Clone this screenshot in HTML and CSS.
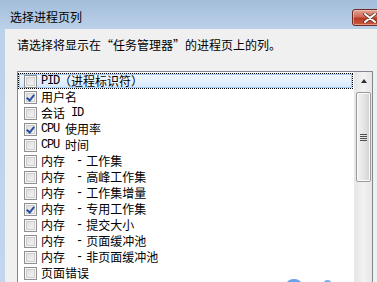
FILE: index.html
```html
<!DOCTYPE html>
<html lang="zh-CN">

<head>
    <meta charset="UTF-8">
    <title>选择进程页列</title>
    <link rel="stylesheet" href="styles.css">
</head>

<body>
    <div class="window">
        <!-- title bar -->
        <div class="titlebar">
            <span class="title">选择进程页列</span>
            <button class="close" aria-label="关闭">
                <svg width="14" height="10" viewBox="0 0 14 10">
                    <path d="M2 1 L12 9 M12 1 L2 9" stroke="#5a2a22" stroke-width="3.4" stroke-linecap="round" />
                    <path d="M2 1 L12 9 M12 1 L2 9" stroke="#ffffff" stroke-width="2" stroke-linecap="round" />
                </svg>
            </button>
        </div>

        <div class="frame">
            <div class="content">
                <p class="hint">请选择将显示在“任务管理器”的进程页上的列。</p>

                <div class="listbox">
                    <ul class="rows">
                        <li class="row selected"><span class="box"></span><span class="lat">PID</span>（进程标识符）</li>
                        <li class="row"><span class="box on"></span>用户名</li>
                        <li class="row"><span class="box"></span>会话<span class="lat"> ID</span></li>
                        <li class="row"><span class="box on"></span><span class="lat">CPU </span>使用率</li>
                        <li class="row"><span class="box"></span><span class="lat">CPU </span>时间</li>
                        <li class="row"><span class="box"></span>内存<span class="dash">-</span>工作集</li>
                        <li class="row"><span class="box"></span>内存<span class="dash">-</span>高峰工作集</li>
                        <li class="row"><span class="box"></span>内存<span class="dash">-</span>工作集增量</li>
                        <li class="row"><span class="box on"></span>内存<span class="dash">-</span>专用工作集</li>
                        <li class="row"><span class="box"></span>内存<span class="dash">-</span>提交大小</li>
                        <li class="row"><span class="box"></span>内存<span class="dash">-</span>页面缓冲池</li>
                        <li class="row"><span class="box"></span>内存<span class="dash">-</span>非页面缓冲池</li>
                        <li class="row"><span class="box"></span>页面错误</li>
                    </ul>

                    <!-- vertical scrollbar -->
                    <div class="scrollbar">
                        <div class="arrow"><span class="tri"></span></div>
                        <div class="thumb"><span class="grip"></span></div>
                    </div>
                </div>
            </div>
        </div>

        <div class="mark"><span class="m1"></span><span class="m2"></span></div>
    </div>
</body>

</html>
```

FILE: styles.css
```css
html,
body {
    margin: 0;
    padding: 0;
}

body {
    width: 377px;
    height: 282px;
    overflow: hidden;
    font-family: "Noto Sans CJK SC", "Liberation Sans", sans-serif;
    font-size: 12px;
    color: #000;
}

.window {
    position: relative;
    height: 282px;
    display: flex;
    flex-direction: column;
    background: linear-gradient(#a2bcd9, #bcd2ea 30px, #c2d7ee);
    overflow: hidden;
}

.titlebar {
    height: 29px;
    flex: none;
    display: flex;
    justify-content: space-between;
    align-items: flex-start;
}

.title {
    margin: 8px 0 0 10px;
    line-height: 18px;
}

.close {
    margin: 9px -12px 0 0;
    width: 37px;
    height: 17px;
    padding: 0 0 0 10px;
    border: 1px solid #6e2a23;
    border-radius: 3px;
    background: linear-gradient(#e3a596, #cf6a55 45%, #b83a24 55%, #c9583f);
    box-shadow: inset 0 0 0 1px rgba(255, 220, 210, 0.5);
    display: flex;
    align-items: center;
}

.frame {
    flex: 1;
    padding-left: 5px;
    display: flex;
}

.content {
    flex: 1;
    background: #f0f0f0;
    padding: 8px 0 0 12px;
}

.hint {
    margin: 0;
    line-height: 16px;
    height: 16px;
}

.listbox {
    margin-top: 18px;
    width: 354px;
    height: 240px;
    border: 1px solid #828790;
    background: #fff;
    display: flex;
}

.rows {
    flex: 1;
    list-style: none;
    margin: 0;
    padding: 1px 1px 0 0;
}

.row {
    box-sizing: border-box;
    height: 16px;
    line-height: 14px;
    display: flex;
    align-items: center;
    padding-left: 5px;
    white-space: pre;
    border: 1px solid transparent;
}

.selected {
    border: 1px dotted #000;
    background: linear-gradient(#f2f8fe, #d6e8fc);
    box-shadow: inset 0 0 0 1px #a8cbf2;
}

.lat {
    font-family: "Liberation Mono", monospace;
    font-size: 12px;
    letter-spacing: -1.2px;
}

.dash {
    font-family: "Liberation Mono", monospace;
    font-size: 12px;
    margin: 0 3px 0 11px;
}

.box {
    flex: none;
    width: 11px;
    height: 11px;
    margin-right: 4px;
    border: 1px solid #8e8f8f;
    background: linear-gradient(135deg, #dcdcdc, #f4f4f4);
    box-shadow: inset 0 0 0 1px #f6f6f6, inset 0 0 0 2px #cfcfcf;
    position: relative;
}

.box.on::after {
    content: "";
    position: absolute;
    left: 3px;
    top: 1px;
    width: 3px;
    height: 6px;
    border: solid #2c4f9e;
    border-width: 0 2px 2px 0;
    transform: rotate(40deg);
}

.scrollbar {
    flex: none;
    width: 17px;
    background: linear-gradient(90deg, #e6e6e6, #f2f2f2 50%, #e6e6e6);
    border-left: 1px solid #e8e8e8;
}

.arrow {
    height: 17px;
    display: flex;
    align-items: center;
    justify-content: center;
}

.tri {
    width: 0;
    height: 0;
    border-left: 3px solid transparent;
    border-right: 3px solid transparent;
    border-bottom: 4px solid #303030;
}

.thumb {
    margin: 3px 1px 0 1px;
    height: 88px;
    border: 1px solid #9a9a9a;
    border-radius: 2px;
    background: linear-gradient(90deg, #f4f4f4, #e2e2e2 60%, #cfcfcf);
    box-shadow: inset 0 0 0 1px #fbfbfb;
    display: flex;
    align-items: center;
    justify-content: center;
}

.grip {
    width: 7px;
    height: 7px;
    background: repeating-linear-gradient(#4f4f4f 0 1px, transparent 1px 2px);
}

/* faint watermark at the bottom edge */
.mark .m1 {
    position: absolute;
    left: 287px;
    top: 279px;
    width: 14px;
    height: 8px;
    border-radius: 50%;
    background: #6aa3ea;
}

.mark .m2 {
    position: absolute;
    left: 324px;
    top: 280px;
    width: 7px;
    height: 5px;
    border-radius: 50%;
    background: #7aaef0;
}
```
